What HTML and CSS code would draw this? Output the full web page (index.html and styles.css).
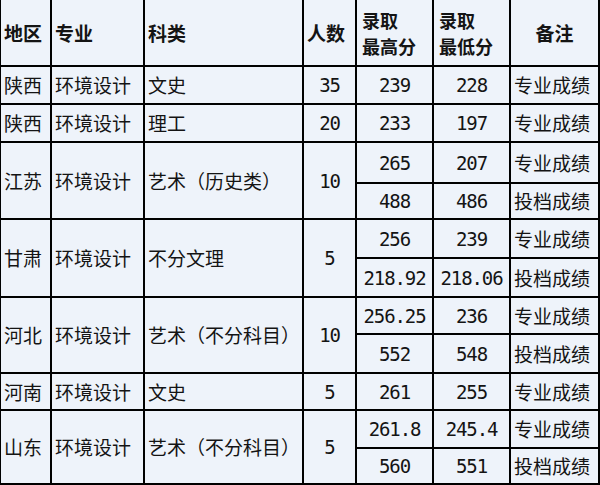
FILE: index.html
```html
<!DOCTYPE html>
<html lang="zh">
<head>
<meta charset="utf-8">
<link rel="stylesheet" href="styles.css">
</head>
<body>
<table class="t">
  <colgroup>
    <col class="w1"><col class="w2"><col class="w3"><col class="w4"><col class="w5"><col class="w6"><col class="w7">
  </colgroup>
  <thead>
    <tr class="rh">
      <th class="l">地区</th>
      <th class="l">专业</th>
      <th class="l">科类</th>
      <th class="l">人数</th>
      <th class="l two">录取<br>最高分</th>
      <th class="l two">录取<br>最低分</th>
      <th>备注</th>
    </tr>
  </thead>
  <tbody>
    <tr class="r38">
      <td class="l">陕西</td><td class="l">环境设计</td><td class="l">文史</td><td class="n">35</td><td class="n">239</td><td class="n">228</td><td class="l">专业成绩</td>
    </tr>
    <tr class="r38">
      <td class="l">陕西</td><td class="l">环境设计</td><td class="l">理工</td><td class="n">20</td><td class="n">233</td><td class="n">197</td><td class="l">专业成绩</td>
    </tr>
    <tr class="r41">
      <td class="l" rowspan="2">江苏</td><td class="l" rowspan="2">环境设计</td><td class="l" rowspan="2">艺术（历史类）</td><td class="n" rowspan="2">10</td><td class="n">265</td><td class="n">207</td><td class="l">专业成绩</td>
    </tr>
    <tr class="r36">
      <td class="n">488</td><td class="n">486</td><td class="l">投档成绩</td>
    </tr>
    <tr class="r39">
      <td class="l" rowspan="2">甘肃</td><td class="l" rowspan="2">环境设计</td><td class="l" rowspan="2">不分文理</td><td class="n" rowspan="2">5</td><td class="n">256</td><td class="n">239</td><td class="l">专业成绩</td>
    </tr>
    <tr class="r39">
      <td class="n">218.92</td><td class="n">218.06</td><td class="l">投档成绩</td>
    </tr>
    <tr class="r37">
      <td class="l" rowspan="2">河北</td><td class="l" rowspan="2">环境设计</td><td class="l" rowspan="2">艺术（不分科目）</td><td class="n" rowspan="2">10</td><td class="n">256.25</td><td class="n">236</td><td class="l">专业成绩</td>
    </tr>
    <tr class="r39">
      <td class="n">552</td><td class="n">548</td><td class="l">投档成绩</td>
    </tr>
    <tr class="r37">
      <td class="l">河南</td><td class="l">环境设计</td><td class="l">文史</td><td class="n">5</td><td class="n">261</td><td class="n">255</td><td class="l">专业成绩</td>
    </tr>
    <tr class="r38">
      <td class="l" rowspan="2">山东</td><td class="l" rowspan="2">环境设计</td><td class="l" rowspan="2">艺术（不分科目）</td><td class="n" rowspan="2">5</td><td class="n">261.8</td><td class="n">245.4</td><td class="l">专业成绩</td>
    </tr>
    <tr class="r36">
      <td class="n">560</td><td class="n">551</td><td class="l">投档成绩</td>
    </tr>
  </tbody>
</table>
</body>
</html>
```

FILE: styles.css
```css
html, body {
  margin: 0;
  padding: 0;
  background: #ffffff;
}

body {
  width: 600px;
  height: 485px;
  overflow: hidden;
}

.t {
  border-collapse: collapse;
  table-layout: fixed;
  width: 599px;
  margin: -2px 0 0 -1px;
  background: #eef3fa;
  color: #141414;
  font-family: "Noto Sans CJK SC", "DejaVu Sans", sans-serif;
  font-size: 19px;
}

.w1 { width: 51px; }
.w2 { width: 93px; }
.w3 { width: 159px; }
.w4 { width: 53px; }
.w5 { width: 77px; }
.w6 { width: 77px; }
.w7 { width: 89px; }

.t th,
.t td {
  border: 2px solid #000;
  padding: 0 3px;
  white-space: nowrap;
  vertical-align: middle;
  text-align: center;
  line-height: 24px;
  overflow: hidden;
}

.t th {
  font-weight: bold;
}

.t th.two {
  font-size: 18px;
  line-height: 26px;
  padding-left: 5px;
}

.t .l {
  text-align: left;
}

.t td.n {
  font-family: "DejaVu Sans Mono", "Liberation Mono", monospace;
  font-size: 19px;
  letter-spacing: -1.1px;
  text-align: center;
}

.rh { height: 67px; }
.r36 { height: 36px; }
.r37 { height: 37px; }
.r38 { height: 38px; }
.r39 { height: 39px; }
.r41 { height: 41px; }
```
